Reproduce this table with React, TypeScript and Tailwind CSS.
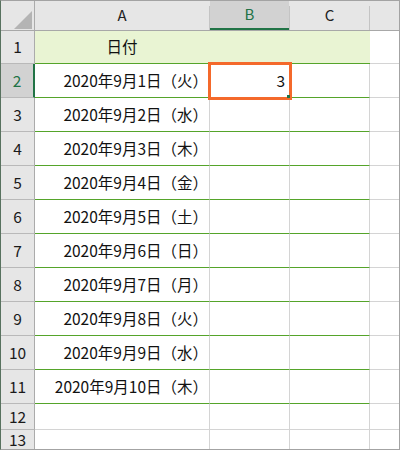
const dates = [
  "2020年9月1日（火）",
  "2020年9月2日（水）",
  "2020年9月3日（木）",
  "2020年9月4日（金）",
  "2020年9月5日（土）",
  "2020年9月6日（日）",
  "2020年9月7日（月）",
  "2020年9月8日（火）",
  "2020年9月9日（水）",
  "2020年9月10日（木）",
];

const HeaderCell = ({ label, width, selected }: { label: string; width: string; selected?: boolean }) => (
  <div className="flex h-full">
    <div
      className={`${width} flex items-center justify-center ${
        selected ? "bg-[#d2d2d2] text-[#217346] border-b-2 border-[#217346]" : "text-[#222]"
      }`}
    >
      {label}
    </div>
    <div className="w-px h-[24px] self-end bg-[#c4c4c4]" />
  </div>
);

const RowHead = ({ n, h, selected }: { n: number; h: string; selected?: boolean }) => (
  <div
    className={`w-[34px] ${h} flex-none flex items-center justify-center border-b border-[#b9b9b9] ${
      selected
        ? "bg-[#d2d2d2] text-[#217346] border-r-2 border-r-[#217346]"
        : "bg-[#e6e6e6] text-[#1a1a1a] border-r border-r-[#ababab]"
    }`}
  >
    {n}
  </div>
);

export default function App() {
  return (
    <div className="relative w-[400px] h-[450px] overflow-hidden bg-white border border-[#a3a3a3] border-l-[#58725f] font-['Noto_Sans_CJK_JP','Noto_Sans',sans-serif] text-[15.5px] text-[#111]">
      {/* column headers */}
      <div className="flex h-[30px] bg-[#e6e6e6] border-b border-[#a8a8a8] text-[15px]">
        <div className="w-[34px] h-full border-r border-[#ababab] flex items-end justify-end pr-[2px] pb-[1px]">
          <svg width="18" height="18" viewBox="0 0 18 18">
            <polygon points="18,0 18,18 0,18" fill="#b4b4b4" />
          </svg>
        </div>
        <HeaderCell label="A" width="w-[174px]" />
        <HeaderCell label="B" width="w-[79px]" selected />
        <HeaderCell label="C" width="w-[79px]" />
        <div className="flex-1" />
      </div>

      {/* row 1 */}
      <div className="flex h-[33px]">
        <RowHead n={1} h="h-[33px]" />
        <div className="w-[335px] flex-none bg-[#e9f4d3] border-b border-[#55a42a] flex">
          <div className="w-[174px] flex items-center justify-center">日付</div>
        </div>
        <div className="flex-1 border-b border-[#d4d4d4]" />
      </div>

      {/* rows 2-11 */}
      {dates.map((d, i) => (
        <div key={d} className="flex h-[34px]">
          <RowHead n={i + 2} h="h-[34px]" selected={i === 0} />
          <div className="w-[175px] flex-none flex items-center justify-end pr-[1px] border-b border-b-[#55a42a] border-r border-r-[#d4d4d4]">
            {d}
          </div>
          <div className="w-[80px] flex-none flex items-center justify-end pr-[4px] border-b border-b-[#55a42a] border-r border-r-[#d4d4d4]">
            {i === 0 ? "3" : ""}
          </div>
          <div className="w-[80px] flex-none border-b border-b-[#55a42a] border-r border-r-[#d4d4d4]" />
          <div className="flex-1 border-b border-[#d4d4d4]" />
        </div>
      ))}

      {/* rows 12-13 */}
      <div className="flex h-[26px]">
        <RowHead n={12} h="h-[26px]" />
        <div className="w-[175px] flex-none border-b border-r border-[#d4d4d4]" />
        <div className="w-[80px] flex-none border-b border-r border-[#d4d4d4]" />
        <div className="w-[80px] flex-none border-b border-r border-[#d4d4d4]" />
        <div className="flex-1 border-b border-[#d4d4d4]" />
      </div>
      <div className="flex h-[19px]">
        <div className="w-[34px] h-full flex-none flex items-center justify-center bg-[#e6e6e6] text-[#1a1a1a] border-r border-[#ababab] leading-none">
          13
        </div>
        <div className="w-[175px] flex-none border-r border-[#d4d4d4]" />
        <div className="w-[80px] flex-none border-r border-[#d4d4d4]" />
        <div className="w-[80px] flex-none border-r border-[#d4d4d4]" />
        <div className="flex-1" />
      </div>

      {/* active cell */}
      <div className="absolute left-[207px] top-[61px] w-[84px] h-[38px] border-[3px] border-[#f4692b]" />
      <div className="absolute left-[286px] top-[94px] w-[3px] h-[3px] bg-[#217346]" />
    </div>
  );
}
